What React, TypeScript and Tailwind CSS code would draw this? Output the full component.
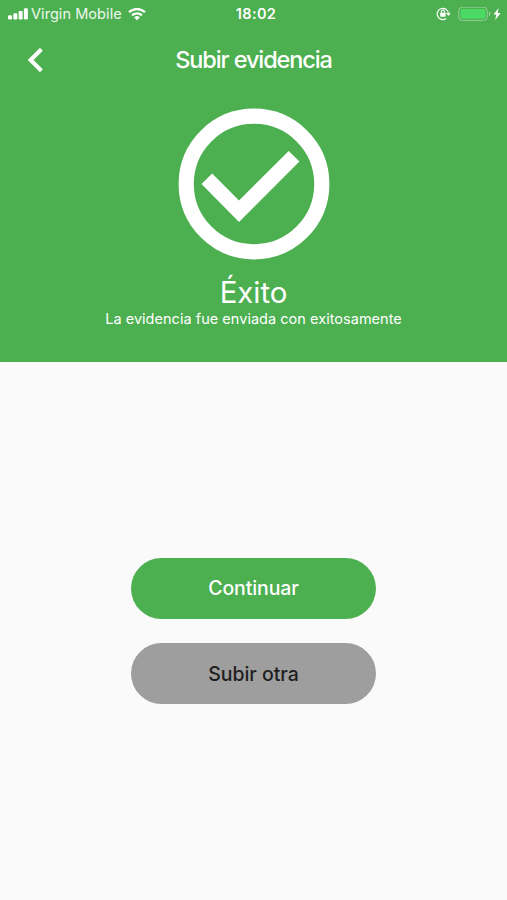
function StatusBar() {
  return (
    <div className="grid h-7 grid-cols-3 items-center pl-2 pr-1.5 text-white">
      <div className="flex items-center">
        <svg width="20" height="12" viewBox="0 0 20 12" fill="currentColor">
          <rect x="0" y="7.3" width="4" height="4.2" rx="1.2" />
          <rect x="5.3" y="5.3" width="4" height="6.2" rx="1.2" />
          <rect x="10.6" y="2.9" width="4" height="8.6" rx="1.2" />
          <rect x="15.9" y="0.3" width="4" height="11.2" rx="1.2" />
        </svg>
        <span className="ml-[3px] whitespace-nowrap text-[14.5px] leading-7 tracking-[0.06px] text-white/90">
          Virgin Mobile
        </span>
        <svg className="ml-1.5 shrink-0" width="18" height="13" viewBox="0 0 18 13" fill="none" stroke="currentColor">
          <path d="M1 4.2a11.6 11.6 0 0 1 16 0" strokeWidth="2.3" />
          <path d="M4 7.4a7.2 7.2 0 0 1 10 0" strokeWidth="2.2" />
          <path d="M9 12.2 6.2 9.4a4 4 0 0 1 5.6 0z" fill="currentColor" stroke="none" />
        </svg>
      </div>

      <span className="pl-[3px] text-center text-[14.5px] font-semibold leading-7 tracking-[0.4px]">18:02</span>

      <div className="flex items-center justify-end">
        {/* Rotation lock */}
        <svg width="15" height="14" viewBox="0 0 15 14" fill="none" stroke="currentColor">
          <path d="M10.2 11.4A5.6 5.6 0 1 1 12.4 6.5" strokeWidth="1.2" />
          <path d="M10 6.1h4.8l-2.4 3z" fill="currentColor" stroke="none" />
          <rect x="4.2" y="5.7" width="5.4" height="4" rx="0.6" fill="currentColor" stroke="none" />
          <path d="M5.3 5.9V4.7a1.6 1.6 0 0 1 3.2 0v1.2" strokeWidth="1.1" />
        </svg>
        <svg className="ml-[7px]" width="33" height="15" viewBox="0 0 33 15">
          <rect x="0.7" y="0.2" width="28.6" height="13.2" rx="3.6" fill="none" stroke="#fff" strokeOpacity="0.4" />
          <rect x="2.4" y="1.9" width="25.2" height="9.8" rx="2" fill="#4cd964" />
          <path d="M31 4.5v4.6c1.7-.8 1.7-3.8 0-4.6z" fill="#fff" fillOpacity="0.5" />
        </svg>
        <svg className="ml-[2px]" width="8" height="12" viewBox="0 0 8 12" fill="currentColor">
          <path d="M5.6 0 0.4 6.6h2.9L2.2 12 7.7 5H4.6z" />
        </svg>
      </div>
    </div>
  );
}

function AppBar() {
  return (
    <div className="grid h-16 grid-cols-[72px_1fr_72px] items-center text-white">
      <button className="ml-[27px] w-4" aria-label="Volver">
        <svg width="17" height="25" viewBox="0 0 17 25" fill="none" stroke="currentColor" strokeWidth="4.1">
          <path d="M14.4 1.3 3.6 12l10.8 10.7" />
        </svg>
      </button>
      <h1 className="text-center text-[23.5px] font-medium leading-none tracking-[-1.1px]">Subir evidencia</h1>
    </div>
  );
}

export default function App() {
  return (
    <div className="flex h-[900px] w-[507px] flex-col bg-[#fafafa] font-['Inter',sans-serif]">
      <header className="h-[362px] bg-[#4caf50]">
        <StatusBar />
        <AppBar />
        <div className="flex flex-col items-center pt-4 text-white">
          <svg width="152" height="152" viewBox="0 0 152 152">
            <circle cx="76" cy="76" r="67.8" fill="none" stroke="currentColor" strokeWidth="15.2" />
            <path d="M23.5 76 34.2 65.4 61 92.4 110.7 42.9 121.4 53.6 61 114z" fill="currentColor" />
          </svg>
          <h2 className="mt-[15px] text-[29.5px] font-normal leading-[34px] tracking-[-0.1px]">Éxito</h2>
          <p className="mt-px text-[14.5px] leading-[17px] tracking-[0.03px]">
            La evidencia fue enviada con exitosamente
          </p>
        </div>
      </header>

      <main className="flex flex-col items-center gap-6 pt-[196px]">
        <button className="h-[61px] w-[245px] rounded-full bg-[#4caf50] pt-px text-[19.5px] font-medium tracking-[-0.1px] text-white">
          Continuar
        </button>
        <button className="h-[61px] w-[245px] rounded-full bg-[#9e9e9e] pt-0.5 text-[19.5px] font-medium tracking-[-0.05px] text-[#1f1f1f]">
          Subir otra
        </button>
      </main>
    </div>
  );
}
